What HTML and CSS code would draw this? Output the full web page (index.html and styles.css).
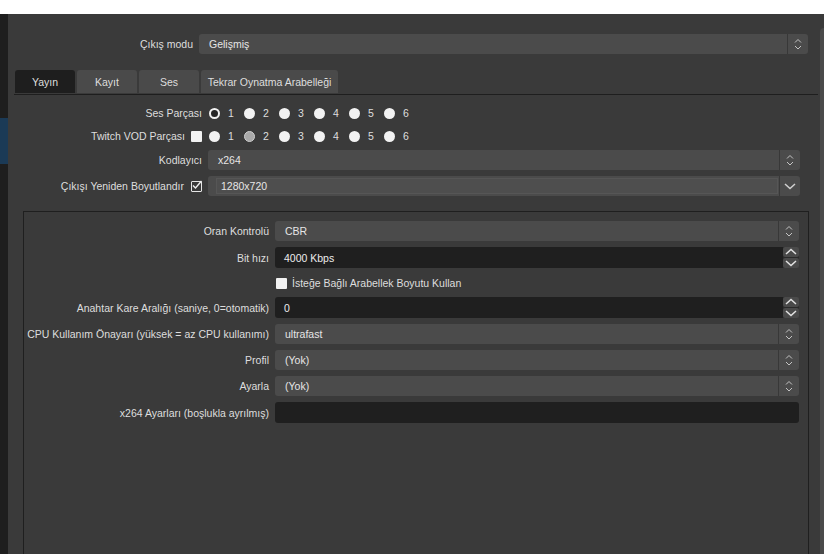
FILE: index.html
```html
<!DOCTYPE html>
<html lang="tr">
<head>
<meta charset="utf-8">
<title>Çıkış Ayarları</title>
<link rel="stylesheet" href="styles.css">
</head>
<body>
<div class="topbar"></div>
<div class="main">
  <aside class="sidebar"><div class="sidebar-sel"></div></aside>
  <div class="content">
    <div class="mode-row">
      <div class="label">Çıkış modu</div>
      <div class="combo">
        <div class="combo-text">Gelişmiş</div>
        <div class="combo-btn"><svg width="20" height="20" viewBox="0 0 20 20"><path d="M7 8.5 L10 5.5 L13 8.5 M7 12 L10 15 L13 12" fill="none" stroke="#c4c4c4" stroke-width="1"/></svg></div>
      </div>
    </div>

    <div class="tabs">
      <div class="tab tab-active">Yayın</div>
      <div class="tab">Kayıt</div>
      <div class="tab">Ses</div>
      <div class="tab tab-wide">Tekrar Oynatma Arabelleği</div>
    </div>

    <div class="pane">
      <div class="form form-top">
        <div class="label">Ses Parçası</div>
        <div class="radios">
          <span class="ritem"><span class="radio radio-on"></span>1</span>
          <span class="ritem"><span class="radio"></span>2</span>
          <span class="ritem"><span class="radio"></span>3</span>
          <span class="ritem"><span class="radio"></span>4</span>
          <span class="ritem"><span class="radio"></span>5</span>
          <span class="ritem"><span class="radio"></span>6</span>
        </div>

        <div class="label label-check">Twitch VOD Parçası <span class="check"></span></div>
        <div class="radios">
          <span class="ritem"><span class="radio"></span>1</span>
          <span class="ritem"><span class="radio radio-dis"></span>2</span>
          <span class="ritem"><span class="radio"></span>3</span>
          <span class="ritem"><span class="radio"></span>4</span>
          <span class="ritem"><span class="radio"></span>5</span>
          <span class="ritem"><span class="radio"></span>6</span>
        </div>

        <div class="label">Kodlayıcı</div>
        <div class="combo">
          <div class="combo-text">x264</div>
          <div class="combo-btn"><svg width="20" height="20" viewBox="0 0 20 20"><path d="M7 8.5 L10 5.5 L13 8.5 M7 12 L10 15 L13 12" fill="none" stroke="#c4c4c4" stroke-width="1"/></svg></div>
        </div>

        <div class="label label-check label-check-wide">Çıkışı Yeniden Boyutlandır <span class="check check-on"><svg width="11" height="11" viewBox="0 0 11 11"><path d="M2 5.5 L4.5 8 L10.5 1" fill="none" stroke="#f0f0f0" stroke-width="1.4"/></svg></span></div>
        <div class="combo combo-edit">
          <div class="combo-inner">1280x720</div>
          <div class="combo-btn"><svg width="20" height="20" viewBox="0 0 20 20"><path d="M5 8 L10 12.5 L15 8" fill="none" stroke="#d0d0d0" stroke-width="1.5"/></svg></div>
        </div>
      </div>

      <div class="group">
        <div class="form form-group">
          <div class="label">Oran Kontrolü</div>
          <div class="combo">
            <div class="combo-text">CBR</div>
            <div class="combo-btn"><svg width="20" height="20" viewBox="0 0 20 20"><path d="M7 8.5 L10 5.5 L13 8.5 M7 12 L10 15 L13 12" fill="none" stroke="#c4c4c4" stroke-width="1"/></svg></div>
          </div>

          <div class="label">Bit hızı</div>
          <div class="spin">
            <div class="spin-field">4000 Kbps</div>
            <div class="spin-btns">
              <div class="spin-btn"><svg width="16" height="10" viewBox="0 0 16 10"><path d="M3 7 L8 2.5 L13 7" fill="none" stroke="#e2e2e2" stroke-width="1.5"/></svg></div>
              <div class="spin-btn"><svg width="16" height="10" viewBox="0 0 16 10"><path d="M3 3 L8 7.5 L13 3" fill="none" stroke="#e2e2e2" stroke-width="1.5"/></svg></div>
            </div>
          </div>

          <div class="label"></div>
          <div class="check-row"><span class="check"></span>İsteğe Bağlı Arabellek Boyutu Kullan</div>

          <div class="label">Anahtar Kare Aralığı (saniye, 0=otomatik)</div>
          <div class="spin">
            <div class="spin-field">0</div>
            <div class="spin-btns">
              <div class="spin-btn"><svg width="16" height="10" viewBox="0 0 16 10"><path d="M3 7 L8 2.5 L13 7" fill="none" stroke="#e2e2e2" stroke-width="1.5"/></svg></div>
              <div class="spin-btn"><svg width="16" height="10" viewBox="0 0 16 10"><path d="M3 3 L8 7.5 L13 3" fill="none" stroke="#e2e2e2" stroke-width="1.5"/></svg></div>
            </div>
          </div>

          <div class="label">CPU Kullanım Önayarı (yüksek = az CPU kullanımı)</div>
          <div class="combo">
            <div class="combo-text">ultrafast</div>
            <div class="combo-btn"><svg width="20" height="20" viewBox="0 0 20 20"><path d="M7 8.5 L10 5.5 L13 8.5 M7 12 L10 15 L13 12" fill="none" stroke="#c4c4c4" stroke-width="1"/></svg></div>
          </div>

          <div class="label">Profil</div>
          <div class="combo">
            <div class="combo-text">(Yok)</div>
            <div class="combo-btn"><svg width="20" height="20" viewBox="0 0 20 20"><path d="M7 8.5 L10 5.5 L13 8.5 M7 12 L10 15 L13 12" fill="none" stroke="#c4c4c4" stroke-width="1"/></svg></div>
          </div>

          <div class="label">Ayarla</div>
          <div class="combo">
            <div class="combo-text">(Yok)</div>
            <div class="combo-btn"><svg width="20" height="20" viewBox="0 0 20 20"><path d="M7 8.5 L10 5.5 L13 8.5 M7 12 L10 15 L13 12" fill="none" stroke="#c4c4c4" stroke-width="1"/></svg></div>
          </div>

          <div class="label">x264 Ayarları (boşlukla ayrılmış)</div>
          <div class="line-edit"></div>
        </div>
      </div>
    </div>
  </div>
  <div class="scroll"><div class="scroll-thumb"></div></div>
</div>
</body>
</html>
```

FILE: styles.css
```css
html, body {
  margin: 0;
  padding: 0;
}
body {
  width: 824px;
  height: 554px;
  overflow: hidden;
  background: #3a3a3a;
  font-family: "Liberation Sans", Arial, sans-serif;
  font-size: 10.5px;
  color: #dedede;
}
.topbar {
  height: 14px;
  background: #ffffff;
}
.main {
  display: flex;
  height: 540px;
  overflow: hidden;
}
.sidebar {
  width: 8px;
  flex: none;
  background: #1e1e1e;
  padding-top: 104px;
  box-sizing: border-box;
}
.sidebar-sel {
  height: 46px;
  background: #1b3a56;
}
.content {
  flex: 1;
  min-width: 0;
}
.scroll {
  width: 4px;
  flex: none;
  padding-top: 14px;
  box-sizing: border-box;
}
.scroll-thumb {
  height: 100%;
  background: #4a4a4a;
  border-radius: 4px 0 0 0;
}

.label {
  line-height: 21px;
  height: 20px;
  text-align: right;
  white-space: nowrap;
}
.label-check {
  display: flex;
  justify-content: flex-end;
  align-items: center;
  gap: 6px;
}
.label-check-wide {
  gap: 7px;
}

.mode-row {
  display: grid;
  grid-template-columns: 185px 1fr;
  column-gap: 6px;
  padding: 20px 12px 0 0;
}

.combo {
  display: flex;
  height: 20px;
  background: #4b4b4b;
  border-radius: 3px;
  color: #e6e6e6;
}
.combo-text {
  flex: 1;
  padding-left: 10px;
  line-height: 21px;
  white-space: nowrap;
}
.combo-btn {
  width: 20px;
  flex: none;
  border-left: 1px solid #383838;
  display: flex;
  align-items: center;
  justify-content: center;
}
.combo-btn svg {
  display: block;
}
.combo-edit {
  padding: 2px 1px 2px 8px;
  box-sizing: border-box;
}
.combo-edit .combo-btn {
  margin: -2px -1px -2px 0;
}
.combo-inner {
  flex: 1;
  background: #4e4e4e;
  border: 1px solid #565656;
  padding-left: 4px;
  line-height: 15px;
  margin-right: 1px;
}

.tabs {
  display: flex;
  align-items: flex-start;
  gap: 2px;
  height: 24px;
  margin: 16px 2px 0 7px;
}
.tab {
  width: 60px;
  height: 23px;
  line-height: 24px;
  text-align: center;
  background: #4a4a4a;
  border-radius: 3px 3px 0 0;
  white-space: nowrap;
}
.tab-active {
  background: #1e1e1e;
}
.tab-wide {
  width: 137px;
}

.pane {
  margin: 0 2px 0 6px;
  border-top: 1px solid #1e1e1e;
  padding-top: 8px;
}

.form {
  display: grid;
  column-gap: 6px;
  align-items: end;
}
.form-top {
  grid-template-columns: 179px 1fr;
  grid-template-rows: 20px 23px 24px 26px;
  margin: 0 18px 0 9px;
}
.form-group {
  grid-template-columns: 245px 1fr;
  grid-template-rows: 20px 27px 25px 25px 26px 26px 26px 27px;
}

.radios {
  display: flex;
  height: 20px;
  align-items: center;
  padding-left: 1px;
}
.ritem {
  width: 35px;
  display: flex;
  align-items: center;
  gap: 8px;
  line-height: 21px;
}
.radio {
  width: 11px;
  height: 11px;
  border-radius: 50%;
  background: #f2f2f2;
  box-sizing: border-box;
  flex: none;
}
.radio-on {
  background: #262626;
  border: 2.5px solid #f2f2f2;
}
.radio-dis {
  background: #a8a8a8;
  border: 1px solid #cfcfcf;
}

.check {
  width: 11px;
  height: 11px;
  background: #f2f2f2;
  border-radius: 1px;
  flex: none;
  box-sizing: border-box;
}
.check-on {
  background: #3a3a3a;
  border: 1px solid #e6e6e6;
  position: relative;
}
.check-on svg {
  position: absolute;
  left: -1px;
  top: -2px;
}

.group {
  margin: 15px 9px 0 9px;
  border: 1px solid #1f1f1f;
  height: 400px;
  padding: 9px 9px 0 0;
}

.spin {
  display: flex;
  height: 21px;
}
.spin-field {
  flex: 1;
  background: #1f1f1f;
  border-radius: 3px 0 0 3px;
  padding-left: 9px;
  line-height: 22px;
  color: #ececec;
}
.spin-btns {
  width: 16px;
  display: flex;
  flex-direction: column;
  gap: 1px;
  background: #2a2a2a;
  border-radius: 0 3px 3px 0;
}
.spin-btn {
  flex: 1;
  background: #4a4a4a;
  border-radius: 2px;
  display: flex;
  align-items: center;
  justify-content: center;
}
.spin-btn svg {
  display: block;
}

.check-row {
  display: flex;
  align-items: center;
  gap: 5px;
  height: 20px;
  line-height: 21px;
  padding-left: 1px;
  white-space: nowrap;
}

.line-edit {
  height: 21px;
  background: #1f1f1f;
  border-radius: 3px;
}
```
